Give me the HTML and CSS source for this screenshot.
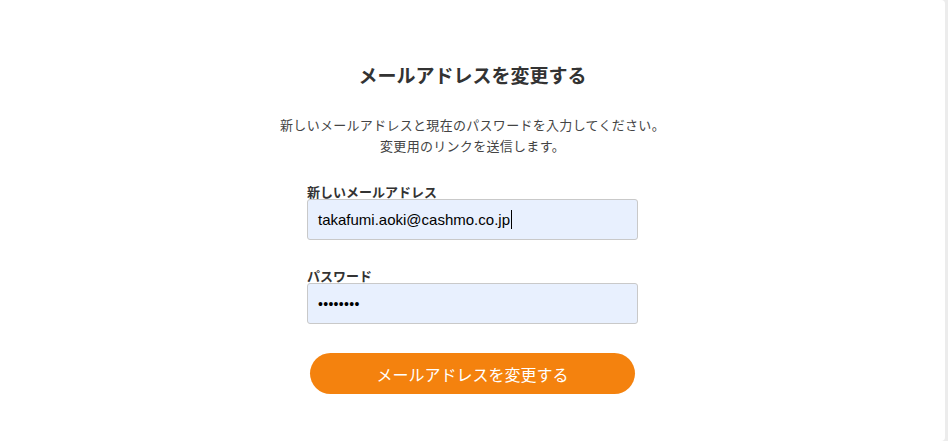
FILE: index.html
```html
<!DOCTYPE html>
<html lang="ja">
<head>
<meta charset="utf-8">
<title>メールアドレスを変更する</title>
<link rel="stylesheet" href="styles.css">
</head>
<body>
<main class="card">
  <h1 class="title">メールアドレスを変更する</h1>
  <p class="desc">新しいメールアドレスと現在のパスワードを入力してください。<br>変更用のリンクを送信します。</p>
  <form class="form">
    <div class="field">
      <label class="label" for="email">新しいメールアドレス</label>
      <div class="input"><span class="value">takafumi.aoki@cashmo.co.jp</span><span class="caret"></span></div>
    </div>
    <div class="field">
      <label class="label" for="pw">パスワード</label>
      <div class="input"><span class="dots">••••••••</span></div>
    </div>
    <button type="button" class="btn">メールアドレスを変更する</button>
  </form>
</main>
</body>
</html>
```
FILE: styles.css
```css
html, body {
  margin: 0;
  padding: 0;
  height: 100%;
}
body {
  background: #ececec;
  font-family: "Noto Sans CJK JP", "Liberation Sans", sans-serif;
  overflow: hidden;
}
.card {
  box-sizing: border-box;
  height: 100%;
  margin-right: 3px;
  background: #fff;
  border-radius: 0 4px 4px 0;
  padding-top: 61px;
  display: flex;
  flex-direction: column;
  align-items: center;
}
.title {
  margin: 0;
  font-size: 19px;
  line-height: 28px;
  font-weight: 700;
  color: #333;
  letter-spacing: 0;
}
.desc {
  margin: 25px 0 0;
  font-size: 13px;
  line-height: 21px;
  color: #444;
  text-align: center;
  letter-spacing: 0.3px;
}
.form {
  margin-top: 28px;
  width: 331px;
  display: flex;
  flex-direction: column;
}
.field {
  display: flex;
  flex-direction: column;
}
.field + .field {
  margin-top: 28px;
}
.label {
  font-size: 13px;
  line-height: 15px;
  font-weight: 700;
  color: #333;
}
.input {
  box-sizing: border-box;
  height: 41px;
  border: 1px solid #c9c9c9;
  border-radius: 3px;
  background: #e8f0fe;
  display: flex;
  align-items: center;
  padding: 0 10px;
  font-family: "Liberation Sans", Arial, sans-serif;
  font-size: 15px;
  color: #000;
}
.caret {
  width: 1px;
  height: 19px;
  background: #000;
  margin-left: 1px;
}
.dots {
  font-size: 14px;
  letter-spacing: 0.3px;
}
.btn {
  margin: 29px auto 0;
  width: 325px;
  height: 41px;
  border: none;
  border-radius: 21px;
  background: #f4820e;
  color: #fff;
  font-family: "Noto Sans CJK JP", "Liberation Sans", sans-serif;
  font-size: 16px;
  padding: 0;
}
```
